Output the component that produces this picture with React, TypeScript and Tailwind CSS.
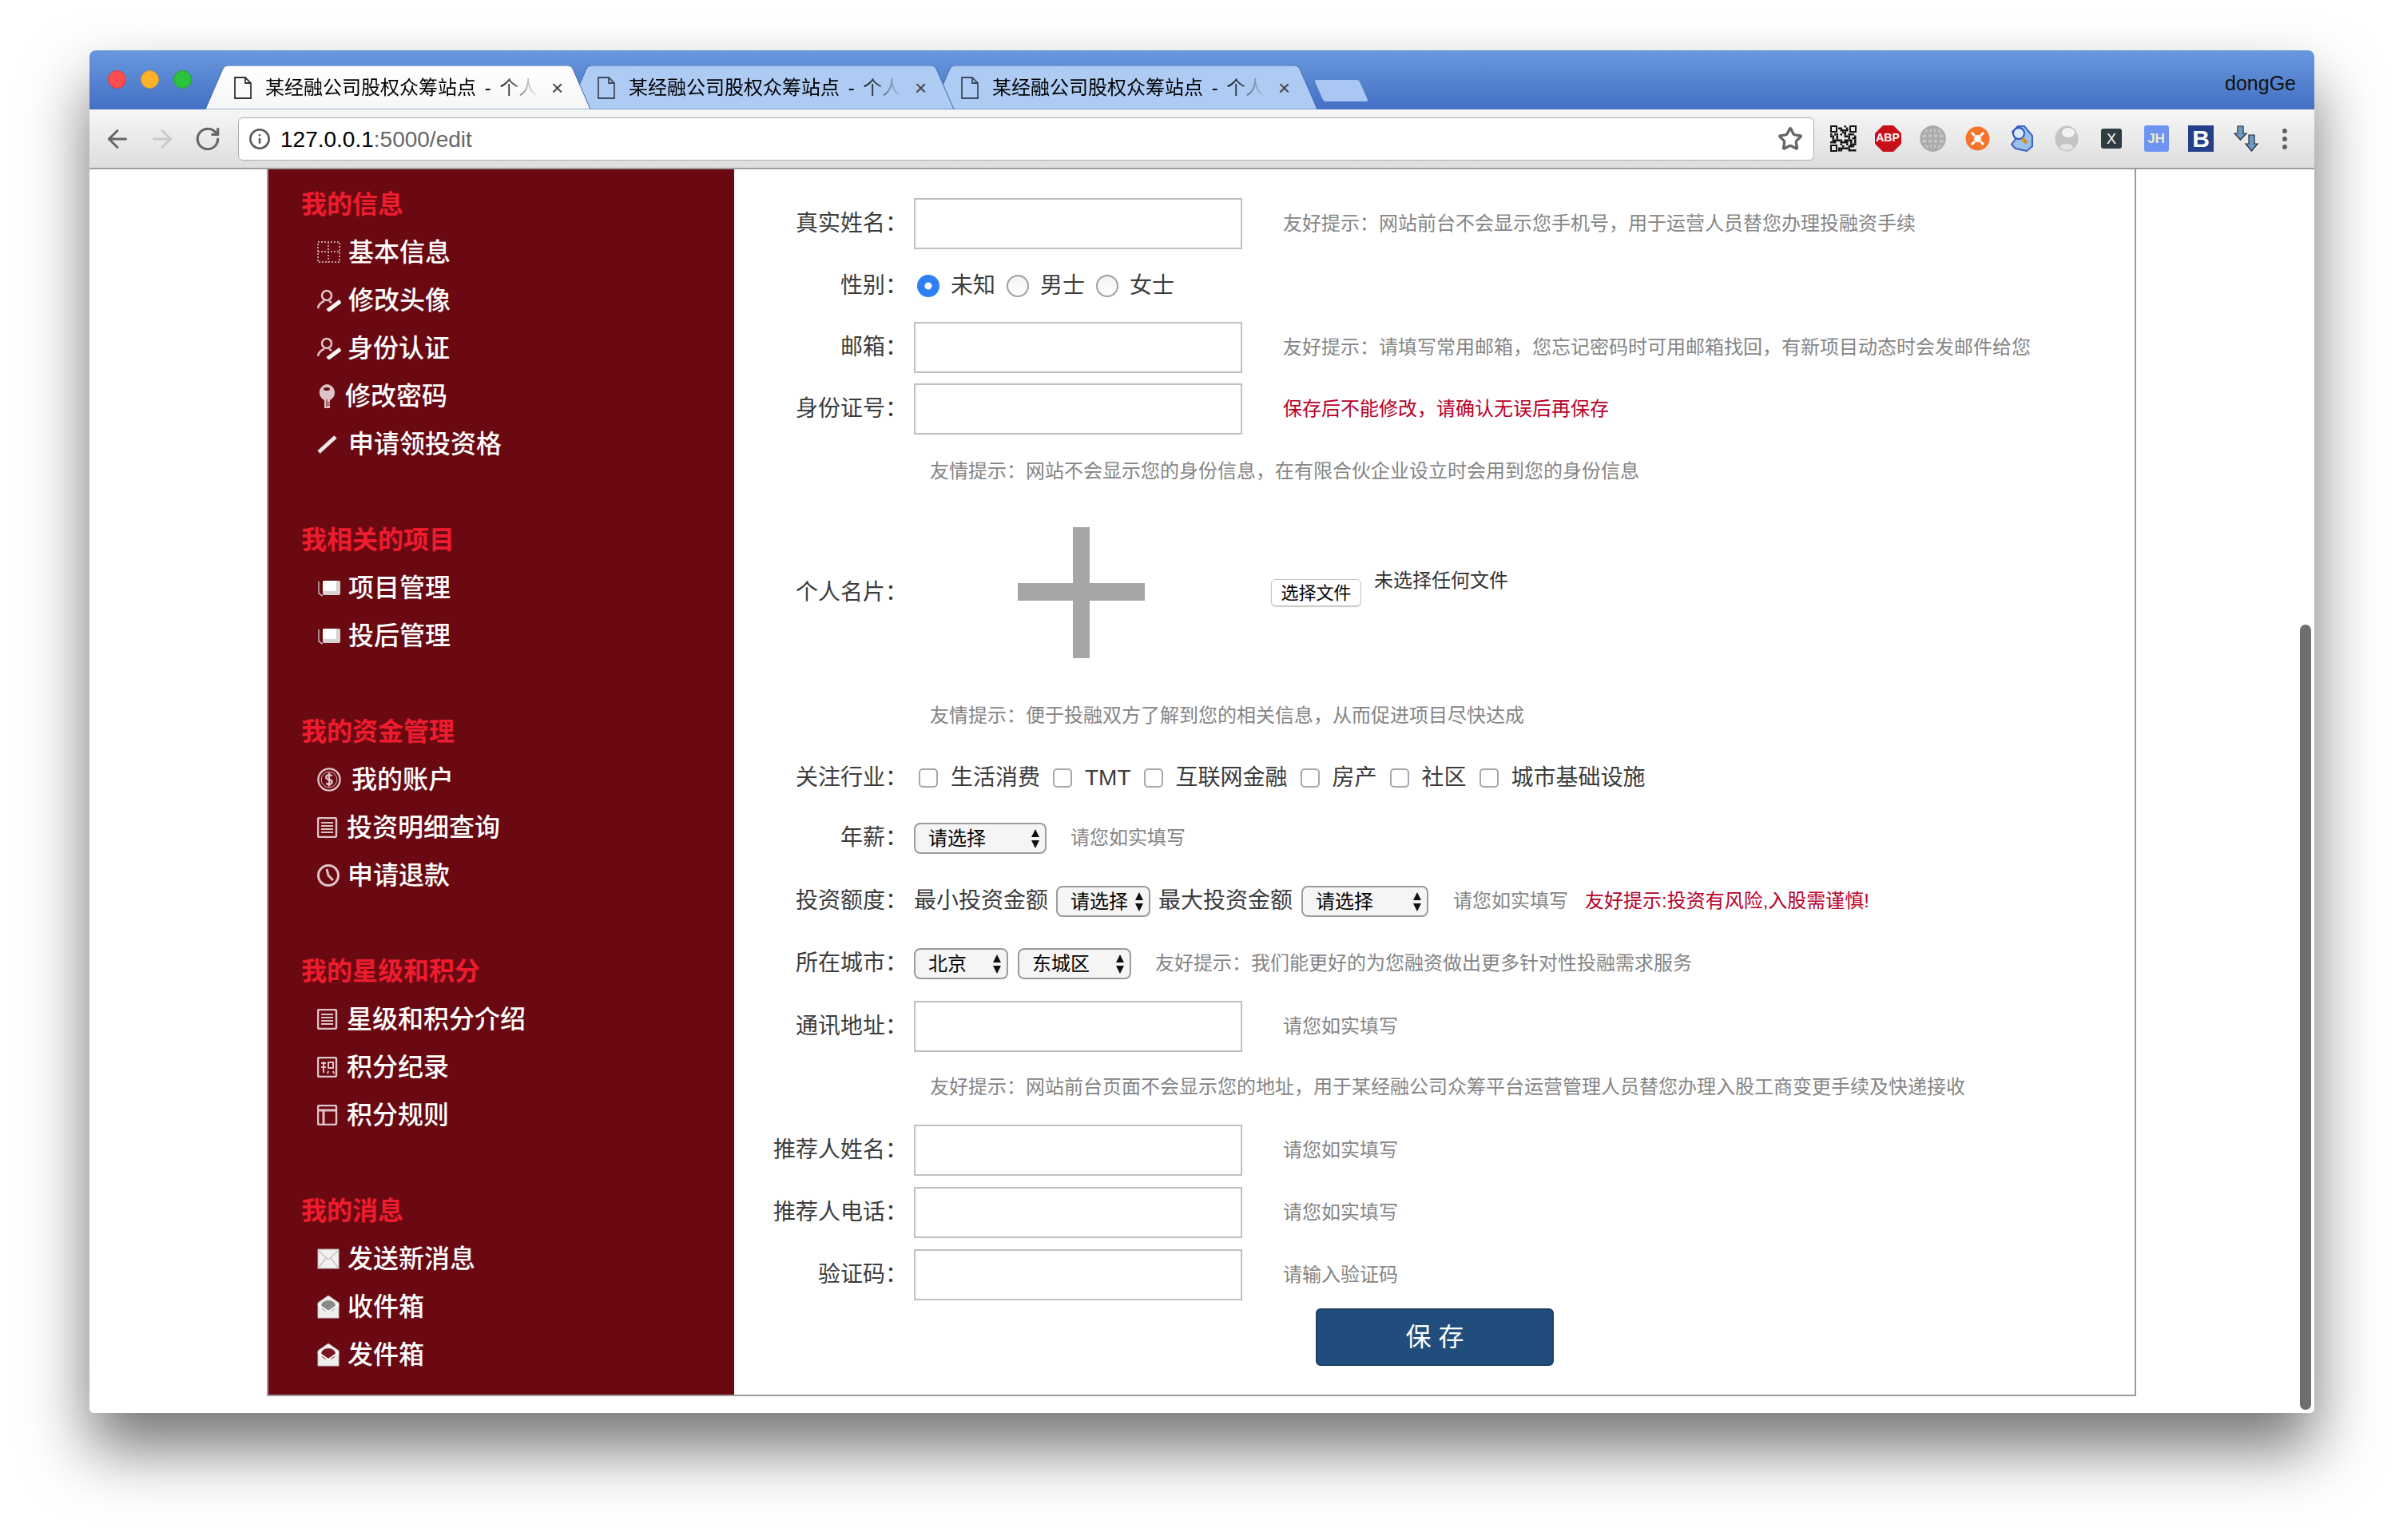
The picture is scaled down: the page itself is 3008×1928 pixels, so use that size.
import type { ReactNode } from 'react';
import { ArrowLeft, ArrowRight, RotateCw, Info, Star } from 'lucide-react';

const ICON = '#dfc4c7';

function GridIcon() {
  return (
    <svg width="30" height="28" viewBox="0 0 30 28" fill="none" stroke="#c09a9f" strokeWidth="2" strokeDasharray="2 2">
      <rect x="1" y="1" width="27" height="25" />
      <path d="M14 1v25M1 13h27" />
    </svg>
  );
}
function UserEditIcon() {
  return (
    <svg width="30" height="28" viewBox="0 0 30 28" fill="none">
      <circle cx="12" cy="8" r="6" stroke={ICON} strokeWidth="2.500" />
      <path d="M1 24c1-6 5-8 8-9M15 15l3 2" stroke={ICON} strokeWidth="2.500" />
      <path d="M13 27l16-12" stroke="#f5f5f5" strokeWidth="5" />
    </svg>
  );
}
function KeyIcon() {
  return (
    <svg width="24" height="32" viewBox="0 0 24 32" fill={ICON}>
      <path d="M12 1a10.500 10.500 0 0 1 4 20v10h-7V21A10.500 10.500 0 0 1 12 1z" />
      <ellipse cx="12" cy="7" rx="4" ry="2" fill="#6a0912" />
      <path d="M12 20v9M13 24h3M13 27h3" stroke="#6a0912" strokeWidth="1" />
    </svg>
  );
}
function PenIcon() {
  return (
    <svg width="26" height="24" viewBox="0 0 26 24">
      <path d="M2 22L23 3" stroke="#ece6e6" strokeWidth="5" />
    </svg>
  );
}
function CardsIcon() {
  return (
    <svg width="30" height="22" viewBox="0 0 30 22">
      <path d="M2 3v15l5 3" stroke="#c7b2b4" strokeWidth="1.500" fill="none" />
      <rect x="7" y="2" width="22" height="18" rx="2" fill="#d8d2d2" />
      <rect x="7" y="2" width="17" height="13" rx="2" fill="#fff" />
    </svg>
  );
}
function DollarIcon() {
  return (
    <svg width="32" height="32" viewBox="0 0 32 32" fill="none" stroke={ICON}>
      <circle cx="16" cy="16" r="14.500" strokeWidth="2.500" />
      <circle cx="16" cy="16" r="10.500" strokeWidth="1" />
      <path d="M20 11c-2-2-8-2-8 2s8 2 8 6-6 4-8 2M16 7v18" strokeWidth="2.500" />
    </svg>
  );
}
function ListIcon() {
  return (
    <svg width="26" height="26" viewBox="0 0 26 26" fill="none" stroke={ICON} strokeWidth="2.500">
      <rect x="1" y="1" width="23" height="24" rx="2" />
      <path d="M5 7h15M5 11h15M5 15h15M5 19h15" strokeWidth="2" />
    </svg>
  );
}
function ClockIcon() {
  return (
    <svg width="30" height="30" viewBox="0 0 30 30" fill="none" stroke={ICON} strokeWidth="3">
      <circle cx="14" cy="15" r="12.500" />
      <path d="M12 7l2 8 6 6" />
    </svg>
  );
}
function ScoreIcon() {
  return (
    <svg width="26" height="26" viewBox="0 0 26 26" fill="none" stroke={ICON} strokeWidth="2.500">
      <rect x="1" y="1" width="23" height="24" rx="2" />
      <path d="M5 8h6M8 6v14M5 13h6M14 7h6v7h-6zM14 18l-1 3M20 18l1 3" strokeWidth="2" />
    </svg>
  );
}
function RuleIcon() {
  return (
    <svg width="26" height="26" viewBox="0 0 26 26" fill="none" stroke={ICON} strokeWidth="2.500">
      <rect x="1" y="1" width="23" height="24" rx="2" />
      <path d="M1 7h23M8 7v18" strokeWidth="3" />
    </svg>
  );
}
function MailIcon() {
  return (
    <svg width="28" height="26" viewBox="0 0 28 26">
      <rect x="1" y="1" width="26" height="24" fill="#f2f0f0" stroke="#bdb5b5" />
      <path d="M1 2l13 12L27 2M1 25l10-13M27 25L17 12" fill="none" stroke="#c9c4c4" strokeWidth="1.500" />
    </svg>
  );
}
function InboxIcon({ color }: { color: string }) {
  return (
    <svg width="28" height="30" viewBox="0 0 28 30">
      <path d="M1 10l13-9 13 9v19H1z" fill="#eee" stroke="#c6bebe" />
      <ellipse cx="14" cy="14" rx="9" ry="7" fill={color} />
      <path d="M1 12l13 9 13-9" fill="none" stroke="#fff" strokeWidth="2" />
    </svg>
  );
}

type Item = { text: string; icon: ReactNode; gap: string };
const sections: { title: string; items: Item[] }[] = [
  {
    title: '我的信息',
    items: [
      { text: '基本信息', icon: <GridIcon />, gap: 'ml-[9px]' },
      { text: '修改头像', icon: <UserEditIcon />, gap: 'ml-[9px]' },
      { text: '身份认证', icon: <UserEditIcon />, gap: 'ml-[8px]' },
      { text: '修改密码', icon: <KeyIcon />, gap: 'ml-[5px]' },
      { text: '申请领投资格', icon: <PenIcon />, gap: 'ml-[9px]' },
    ],
  },
  {
    title: '我相关的项目',
    items: [
      { text: '项目管理', icon: <CardsIcon />, gap: 'ml-[9px]' },
      { text: '投后管理', icon: <CardsIcon />, gap: 'ml-[9px]' },
    ],
  },
  {
    title: '我的资金管理',
    items: [
      { text: '我的账户', icon: <DollarIcon />, gap: 'ml-[13px]' },
      { text: '投资明细查询', icon: <ListIcon />, gap: 'ml-[7px]' },
      { text: '申请退款', icon: <ClockIcon />, gap: 'ml-[8px]' },
    ],
  },
  {
    title: '我的星级和积分',
    items: [
      { text: '星级和积分介绍', icon: <ListIcon />, gap: 'ml-[7px]' },
      { text: '积分纪录', icon: <ScoreIcon />, gap: 'ml-[7px]' },
      { text: '积分规则', icon: <RuleIcon />, gap: 'ml-[7px]' },
    ],
  },
  {
    title: '我的消息',
    items: [
      { text: '发送新消息', icon: <MailIcon />, gap: 'ml-[8px]' },
      { text: '收件箱', icon: <InboxIcon color="#8a8a8a" />, gap: 'ml-[8px]' },
      { text: '发件箱', icon: <InboxIcon color="#7a1420" />, gap: 'ml-[8px]' },
    ],
  },
];

function Sidebar() {
  return (
    <aside className="w-[583px] shrink-0 bg-[#6a0912] pt-[14px]">
      {sections.map((s) => (
        <div key={s.title} className="mb-[60px]">
          <h3 className="flex h-[60px] items-center pl-[41px] text-[32px] font-bold text-[#ee1c2e]">{s.title}</h3>
          {s.items.map((it) => (
            <div key={it.text} className="flex h-[60px] items-center pl-[61px] text-[32px] font-medium text-white">
              <span className="flex w-[30px] justify-start">{it.icon}</span>
              <span className={it.gap}>{it.text}</span>
            </div>
          ))}
        </div>
      ))}
    </aside>
  );
}

function Row({ h, label, children }: { h: string; label: string; children: ReactNode }) {
  return (
    <div className={`flex items-center ${h}`}>
      <label className="w-[217px] shrink-0 text-right text-[28px] text-[#3c3c3c]">{label}</label>
      <div className="ml-[8px] flex items-center">{children}</div>
    </div>
  );
}

function TextInput() {
  return <input type="text" className="h-[64px] w-[411px] border-2 border-[#bfbfbf] bg-white" />;
}

function Hint({ children, red, className }: { children: ReactNode; red?: boolean; className?: string }) {
  return <span className={`text-[24px] whitespace-nowrap ${red ? 'text-[#b8002a]' : 'text-[#858585]'} ${className ?? ''}`}>{children}</span>;
}

function Select({ w, value }: { w: string; value: string }) {
  return (
    <div className={`relative h-[39px] ${w}`}>
      <select className="h-full w-full appearance-none rounded-[8px] border-2 border-[#9c9c9c] bg-[#f5f5f5] pl-[16px] text-[24px] text-black">
        <option>{value}</option>
      </select>
      <svg className="pointer-events-none absolute top-[8px] right-[8px]" width="12" height="24" viewBox="0 0 12 24" fill="#111">
        <path d="M6 0l5 10H1zM6 24l-5-10h10z" />
      </svg>
    </div>
  );
}

function Radio({ checked }: { checked?: boolean }) {
  return (
    <input
      type="radio"
      readOnly
      checked={!!checked}
      className={
        checked
          ? 'h-[28px] w-[28px] appearance-none rounded-full bg-[radial-gradient(circle,white_4px,#2f80f5_5px)]'
          : 'h-[28px] w-[28px] appearance-none rounded-full border-2 border-[#a0a0a0] bg-gradient-to-b from-[#f2f2f2] to-white'
      }
    />
  );
}

function Check({ label }: { label: string }) {
  return (
    <span className="mr-[16px] flex items-center gap-[16px] text-[28px] text-[#3c3c3c]">
      <input type="checkbox" className="h-[24px] w-[24px] appearance-none rounded-[5px] border-2 border-[#a8a8a8] bg-white" />
      {label}
    </span>
  );
}

function EditForm() {
  return (
    <form className="min-w-0 flex-1 overflow-hidden pt-[29px]">
      <Row h="h-[78px]" label="真实姓名：">
        <TextInput />
        <Hint className="ml-[51px]">友好提示：网站前台不会显示您手机号，用于运营人员替您办理投融资手续</Hint>
      </Row>
      <Row h="h-[78px]" label="性别：">
        <div className="ml-[4px] flex items-center text-[28px] text-[#3c3c3c]">
          <Radio checked />
          <span className="mx-[14px]">未知</span>
          <Radio />
          <span className="mx-[14px]">男士</span>
          <Radio />
          <span className="mx-[14px]">女士</span>
        </div>
      </Row>
      <Row h="h-[76px]" label="邮箱：">
        <TextInput />
        <Hint className="ml-[51px]">友好提示：请填写常用邮箱，您忘记密码时可用邮箱找回，有新项目动态时会发邮件给您</Hint>
      </Row>
      <Row h="h-[78px]" label="身份证号：">
        <TextInput />
        <Hint red className="ml-[51px]">保存后不能修改，请确认无误后再保存</Hint>
      </Row>
      <div className="flex h-[78px] items-center pl-[245px]">
        <Hint>友情提示：网站不会显示您的身份信息，在有限合伙企业设立时会用到您的身份信息</Hint>
      </div>
      <Row h="h-[226px]" label="个人名片：">
        <svg className="ml-[130px]" width="159" height="164" viewBox="0 0 159 164" fill="#a6a6a6">
          <path d="M69 0h21v70h69v22H90v72H69V92H0V70h69z" />
        </svg>
        <button type="button" className="ml-[158px] h-[34px] w-[113px] rounded-[6px] border border-[#c4c4c4] bg-white text-[22px] text-black shadow-[0_1px_1px_rgba(0,0,0,0.2)]">
          选择文件
        </button>
        <span className="ml-[16px] -translate-y-[15px] text-[24px] text-[#333]">未选择任何文件</span>
      </Row>
      <div className="flex h-[82px] items-center pl-[245px]">
        <Hint>友情提示：便于投融双方了解到您的相关信息，从而促进项目尽快达成</Hint>
      </div>
      <Row h="h-[74px]" label="关注行业：">
        <div className="ml-[6px] flex items-center">
          {['生活消费', 'TMT', '互联网金融', '房产', '社区', '城市基础设施'].map((t) => (
            <Check key={t} label={t} />
          ))}
        </div>
      </Row>
      <Row h="h-[76px]" label="年薪：">
        <Select w="w-[166px]" value="请选择" />
        <Hint className="ml-[30px]">请您如实填写</Hint>
      </Row>
      <Row h="h-[82px]" label="投资额度：">
        <span className="text-[28px] text-[#3c3c3c]">最小投资金额</span>
        <div className="mx-[10px]">
          <Select w="w-[118px]" value="请选择" />
        </div>
        <span className="text-[28px] text-[#3c3c3c]">最大投资金额</span>
        <div className="ml-[11px]">
          <Select w="w-[159px]" value="请选择" />
        </div>
        <Hint className="ml-[31px]">请您如实填写</Hint>
        <Hint red className="ml-[21px]">友好提示:投资有风险,入股需谨慎!</Hint>
      </Row>
      <Row h="h-[74px]" label="所在城市：">
        <Select w="w-[118px]" value="北京" />
        <div className="ml-[12px]">
          <Select w="w-[142px]" value="东城区" />
        </div>
        <Hint className="ml-[30px]">友好提示：我们能更好的为您融资做出更多针对性投融需求服务</Hint>
      </Row>
      <Row h="h-[84px]" label="通讯地址：">
        <TextInput />
        <Hint className="ml-[51px]">请您如实填写</Hint>
      </Row>
      <div className="flex h-[68px] items-center pl-[245px]">
        <Hint>友好提示：网站前台页面不会显示您的地址，用于某经融公司众筹平台运营管理人员替您办理入股工商变更手续及快递接收</Hint>
      </div>
      <Row h="h-[90px]" label="推荐人姓名：">
        <TextInput />
        <Hint className="ml-[51px]">请您如实填写</Hint>
      </Row>
      <Row h="h-[66px]" label="推荐人电话：">
        <TextInput />
        <Hint className="ml-[51px]">请您如实填写</Hint>
      </Row>
      <Row h="h-[90px]" label="验证码：">
        <TextInput />
        <Hint className="ml-[51px]">请输入验证码</Hint>
      </Row>
      <button type="button" className="-mt-[3px] ml-[728px] block h-[72px] w-[298px] rounded-[6px] border-2 border-[#1c4169] bg-[#214d7c] text-[32px] text-white">
        保 存
      </button>
    </form>
  );
}

function Tab({ active, z }: { active?: boolean; z: string }) {
  return (
    <div className={`relative -mr-[27px] h-[55px] w-[482px] shrink-0 ${z}`}>
      <svg className="absolute inset-0" width="482" height="55" viewBox="0 0 482 55">
        {active && (
          <defs>
            <linearGradient id="activeTab" x1="0" y1="0" x2="0" y2="1">
              <stop offset="0" stopColor="#ffffff" />
              <stop offset="1" stopColor="#f6f6f6" />
            </linearGradient>
          </defs>
        )}
        <path
          d="M0 55L22 4Q24 0 28 0L454 0Q458 0 460 4L482 55Z"
          fill={active ? 'url(#activeTab)' : '#aecbf4'}
          stroke="#3f69ad"
          strokeWidth="1"
        />
      </svg>
      <div className="relative flex h-full items-center pl-[36px]">
        <svg className="shrink-0" width="22" height="28" viewBox="0 0 22 28" fill="none" stroke={active ? '#333' : '#3f4a5e'} strokeWidth="1.800">
          <path d="M1 1h13l7 7v19H1zM14 1v7h7" />
        </svg>
        <span className="ml-[17px] w-[348px] text-[24px] whitespace-nowrap text-black [word-spacing:4px] [mask-image:linear-gradient(to_right,black_84%,transparent_98%)]">
          某经融公司股权众筹站点 - 个人
        </span>
        <span className="ml-[10px] text-[26px] leading-none text-[#444]">×</span>
      </div>
    </div>
  );
}

function QrIcon() {
  const bits = '1011001110100110010110100111010011001011010011101100101101110010110100110101101100101';
  const cells = [];
  for (let y = 0; y < 13; y++) {
    for (let x = 0; x < 13; x++) {
      const finder = (x < 4 && y < 4) || (x > 8 && y < 4) || (x < 4 && y > 8);
      if (!finder && bits[(x * 7 + y * 11) % bits.length] === '1') {
        cells.push(<rect key={`${x}-${y}`} x={x * 2.500} y={y * 2.500} width="2.500" height="2.500" />);
      }
    }
  }
  return (
    <svg width="33" height="33" viewBox="0 0 33 33" fill="#111">
      {cells}
      <path d="M0 0h9v9H0zM2 2v5h5V2zM24 0h9v9h-9zM26 2v5h5V2zM0 24h9v9H0zM2 26v5h5v-5z" fillRule="evenodd" />
    </svg>
  );
}

function Extensions() {
  return (
    <div className="ml-[8px] flex items-center">
      <span className="flex w-[56px] justify-center"><QrIcon /></span>
      <span className="relative flex w-[56px] justify-center">
        <svg width="33" height="33" viewBox="0 0 33 33"><path d="M10 0h13l10 10v13L23 33H10L0 23V10z" fill="#c8101a" /></svg>
        <span className="absolute top-[8px] text-[14px] leading-none font-bold text-white">ABP</span>
      </span>
      <span className="flex w-[56px] justify-center">
        <svg width="33" height="33" viewBox="0 0 33 33" fill="none" stroke="#a9a9a9" strokeWidth="2.500">
          <circle cx="16.500" cy="16.500" r="15" fill="#c4c4c4" />
          <ellipse cx="16.500" cy="16.500" rx="7" ry="15" />
          <path d="M16.500 1v31M3 10h27M3 23h27M1.500 16.500h30" />
        </svg>
      </span>
      <span className="flex w-[56px] justify-center">
        <svg width="31" height="31" viewBox="0 0 31 31">
          <circle cx="15.500" cy="15.500" r="15" fill="#f5742b" />
          <circle cx="15.500" cy="15.500" r="4.500" fill="#fff" />
          <path d="M8 8l4 4M23 8l-4 4M8 23l4-4M23 23l-4-4" stroke="#fff" strokeWidth="3" />
        </svg>
      </span>
      <span className="flex w-[56px] justify-center">
        <svg width="30" height="33" viewBox="0 0 30 33">
          <path d="M10 1h8l10 12v13l-7 6-14-3-5-5 5-7-4-9z" fill="#9cc0e8" stroke="#3c63c5" strokeWidth="2" />
          <circle cx="11" cy="10" r="7" fill="#d8ebfc" stroke="#2d53c8" strokeWidth="2" />
          <path d="M15 16l6 6" stroke="#d0901a" strokeWidth="4" />
        </svg>
      </span>
      <span className="flex w-[56px] justify-center">
        <svg width="30" height="33" viewBox="0 0 30 33">
          <ellipse cx="15" cy="16.500" rx="14.500" ry="16" fill="#c4c4c4" />
          <ellipse cx="17" cy="9" rx="8" ry="6" fill="#f2f2f2" />
          <ellipse cx="15" cy="27" rx="8" ry="4" fill="#e4e4e4" />
        </svg>
      </span>
      <span className="flex w-[56px] justify-center">
        <span className="flex h-[25px] w-[26px] items-center justify-center rounded-[3px] bg-[#2f3d42] text-[18px] leading-none text-white">X</span>
      </span>
      <span className="flex w-[56px] justify-center">
        <span className="flex h-[33px] w-[31px] items-center justify-center rounded-[3px] bg-[#6e93f2] text-[17px] leading-none font-bold text-[#e8edc8]">JH</span>
      </span>
      <span className="flex w-[56px] justify-center">
        <span className="flex h-[33px] w-[32px] items-center justify-center bg-[#24408a] text-[30px] leading-none font-bold text-white">B</span>
      </span>
      <span className="flex w-[56px] justify-center">
        <svg width="31" height="33" viewBox="0 0 31 33" fill="#6d9bc4" stroke="#1f2d3a" strokeWidth="1.200">
          <path d="M5 1h7v9h4l-7.500 8L1 10h4zM19 12h7v11h4l-7.500 9L15 23h4z" />
        </svg>
      </span>
      <span className="flex w-[42px] flex-col items-center gap-[4px]">
        <span className="h-[6px] w-[6px] rounded-full bg-[#5f5f5f]" />
        <span className="h-[6px] w-[6px] rounded-full bg-[#5f5f5f]" />
        <span className="h-[6px] w-[6px] rounded-full bg-[#5f5f5f]" />
      </span>
    </div>
  );
}

export default function App() {
  return (
    <div className="h-[1928px] overflow-hidden bg-white pt-[63px] pl-[112px] [font-family:'Liberation_Sans','Noto_Sans_CJK_SC',sans-serif]">
      <div className="relative flex h-[1706px] w-[2785px] flex-col overflow-hidden rounded-t-[8px] rounded-b-[6px] bg-white shadow-[0_44px_80px_rgba(0,0,0,0.55)]">
        {/* tab strip */}
        <div className="flex h-[74px] shrink-0 items-end bg-gradient-to-b from-[#6a98dd] to-[#4370c4]">
          <div className="mb-[26px] ml-[23px] flex w-[122px] gap-[18px]">
            <span className="h-[23px] w-[23px] rounded-full border border-[#d8383a] bg-[#fc4e50]" />
            <span className="h-[23px] w-[23px] rounded-full border border-[#d89a20] bg-[#fdb22a]" />
            <span className="h-[23px] w-[23px] rounded-full border border-[#20a030] bg-[#2ac43c]" />
          </div>
          <Tab active z="z-30" />
          <Tab z="z-20" />
          <Tab z="z-10" />
          <div className="mb-[10px] ml-[29px] h-[27px] w-[56px] [transform:skewX(24deg)] rounded-[3px] bg-[#a9c7f2]" />
          <span className="mb-[20px] ml-auto pr-[23px] text-[25px] leading-none text-[#111]">dongGe</span>
        </div>
        {/* toolbar */}
        <div className="flex h-[75px] shrink-0 items-center border-b-2 border-[#9c9c9c] bg-gradient-to-b from-[#f6f6f6] to-[#dedede]">
          <div className="flex w-[186px] items-center pl-[17px]">
            <ArrowLeft size={36} strokeWidth={2} color="#666" />
            <ArrowRight size={36} strokeWidth={2} color="#c9c9c9" className="ml-[20px]" />
            <RotateCw size={34} strokeWidth={2.200} color="#666" className="ml-[22px]" />
          </div>
          <div className="flex h-[54px] w-[1973px] items-center rounded-[6px] border border-[#a9a9a9] bg-white pr-[13px] pl-[12px]">
            <Info size={28} strokeWidth={2.200} color="#5a5a5a" />
            <span className="ml-[12px] pt-[2px] text-[28px] text-black">
              127.0.0.1<span className="text-[#666]">:5000/edit</span>
            </span>
            <Star size={32} strokeWidth={2.500} color="#666" className="ml-auto" />
          </div>
          <Extensions />
        </div>
        {/* page */}
        <div className="min-h-0 flex-1 bg-white pl-[222px]">
          <div className="flex h-[1536px] w-[2340px] border-r-2 border-b-2 border-l-2 border-[#9c9c9c]">
            <Sidebar />
            <EditForm />
          </div>
        </div>
        <div className="absolute top-[719px] right-[4px] h-[983px] w-[14px] rounded-full bg-[#6e6e6e]" />
      </div>
    </div>
  );
}
